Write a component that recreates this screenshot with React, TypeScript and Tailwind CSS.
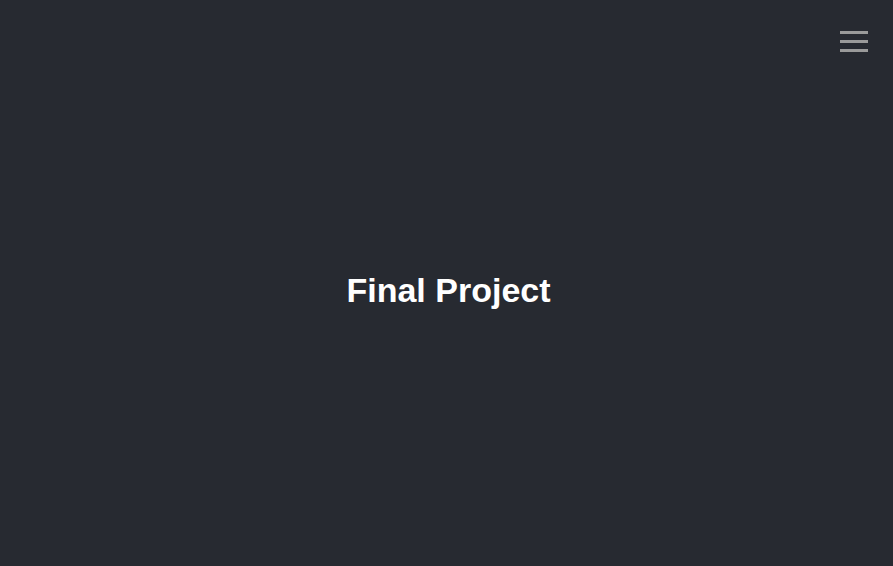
import React from "react";

export default function App() {
  return (
    <div className="relative flex h-[566px] w-full flex-col items-center justify-center bg-[#272a31] font-['Liberation_Sans',Arial,sans-serif]">
      <button className="absolute right-[25px] top-[31px] flex w-[28px] flex-col gap-[6px]" aria-label="menu">
        <span className="block h-[3px] w-[28px] bg-[#9a9a9a]" />
        <span className="block h-[3px] w-[28px] bg-[#9a9a9a]" />
        <span className="block h-[3px] w-[28px] bg-[#9a9a9a]" />
      </button>
      <h1 className="ml-[4px] mt-[16px] text-[34px] font-bold leading-[1.15] text-white">Final Project</h1>
    </div>
  );
}
